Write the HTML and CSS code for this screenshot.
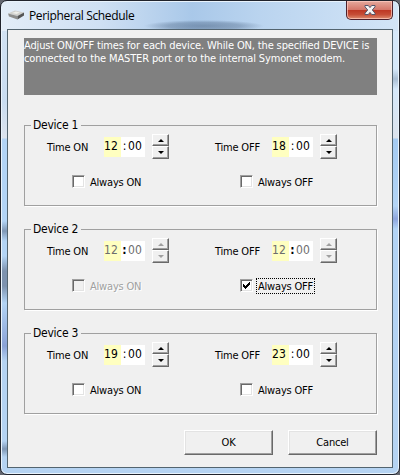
FILE: index.html
```
<!DOCTYPE html>
<html lang="en">
<head>
	<meta charset="utf-8">
	<title>Peripheral Schedule</title>
	<link rel="stylesheet" href="styles.css">
</head>
<body>
	<div class="window">
		<!-- title bar -->
		<div class="titlebar">
			<svg class="app-icon" width="16" height="10" viewBox="0 0 16 10">
				<path d="M0 3.5 7 0.5 16 2.5 9.5 6z" fill="#d0d0cc"/>
				<path d="M0 3.5 9.5 6V9.5L1 6.5z" fill="#8d8d8b"/>
				<path d="M9.5 6 16 2.5V5.5L9.5 9.5z" fill="#555"/>
				<path d="M4 3 8 1.5 12 2.5 8.5 4z" fill="#eeeeea"/>
			</svg>
			<span class="title">Peripheral Schedule</span>
			<button class="close" type="button" aria-label="Close">
				<svg width="12" height="10" viewBox="0 0 12 10">
					<path d="M1 .5H4.3L6 2.6 7.7.5H11V1.8L8.3 5 11 8.2V9.5H7.7L6 7.4 4.3 9.5H1V8.2L3.7 5 1 1.8z" fill="#f4f4f4" stroke="#53566b"/>
				</svg>
			</button>
		</div>

		<div class="client">
			<p class="description">Adjust ON/OFF times for each device. While ON, the specified DEVICE is<br>connected to the MASTER port or to the internal Symonet modem.</p>

			<!-- device groups -->
			<fieldset class="group">
				<legend>Device 1</legend>
				<div class="setting">
					<div class="time-row">
						<span class="label">Time ON</span>
						<div class="time"><span class="hour">12</span><span class="colon">:</span><span class="minute">00</span></div>
						<div class="spin"><button type="button" class="up"></button><button type="button" class="down"></button></div>
					</div>
					<label class="always"><span class="box"></span><span class="text">Always ON</span></label>
				</div>
				<div class="setting">
					<div class="time-row">
						<span class="label">Time OFF</span>
						<div class="time"><span class="hour">18</span><span class="colon">:</span><span class="minute">00</span></div>
						<div class="spin"><button type="button" class="up"></button><button type="button" class="down"></button></div>
					</div>
					<label class="always"><span class="box"></span><span class="text">Always OFF</span></label>
				</div>
			</fieldset>

			<fieldset class="group">
				<legend>Device 2</legend>
				<div class="setting disabled">
					<div class="time-row">
						<span class="label">Time ON</span>
						<div class="time"><span class="hour">12</span><span class="colon">:</span><span class="minute">00</span></div>
						<div class="spin"><button type="button" class="up"></button><button type="button" class="down"></button></div>
					</div>
					<label class="always off"><span class="box"></span><span class="text">Always ON</span></label>
				</div>
				<div class="setting disabled">
					<div class="time-row">
						<span class="label">Time OFF</span>
						<div class="time"><span class="hour">12</span><span class="colon">:</span><span class="minute">00</span></div>
						<div class="spin"><button type="button" class="up"></button><button type="button" class="down"></button></div>
					</div>
					<label class="always focused">
						<span class="box"><svg width="7" height="7" viewBox="0 0 7 7" shape-rendering="crispEdges"><path d="M0 2H1V3H2V4H3V3H4V2H5V1H6V0H7V3H6V4H5V5H4V6H3V7H2V6H1V5H0z" fill="#000"/></svg></span>
						<span class="text">Always OFF</span>
					</label>
				</div>
			</fieldset>

			<fieldset class="group">
				<legend>Device 3</legend>
				<div class="setting">
					<div class="time-row">
						<span class="label">Time ON</span>
						<div class="time"><span class="hour">19</span><span class="colon">:</span><span class="minute">00</span></div>
						<div class="spin"><button type="button" class="up"></button><button type="button" class="down"></button></div>
					</div>
					<label class="always"><span class="box"></span><span class="text">Always ON</span></label>
				</div>
				<div class="setting">
					<div class="time-row">
						<span class="label">Time OFF</span>
						<div class="time"><span class="hour">23</span><span class="colon">:</span><span class="minute">00</span></div>
						<div class="spin"><button type="button" class="up"></button><button type="button" class="down"></button></div>
					</div>
					<label class="always"><span class="box"></span><span class="text">Always OFF</span></label>
				</div>
			</fieldset>

			<div class="buttons">
				<button type="button">OK</button>
				<button type="button">Cancel</button>
			</div>
		</div>
	</div>
</body>
</html>
```
FILE: styles.css
```
* {
	margin: 0;
	padding: 0;
	box-sizing: border-box;
}

body {
	width: 400px;
	height: 475px;
	overflow: hidden;
	background: #63666f;
	font-family: "DejaVu Sans Condensed", "DejaVu Sans", sans-serif;
	font-stretch: condensed;
	font-size: 11px;
	line-height: 13px;
	letter-spacing: -.2px;
	color: #000;
	white-space: nowrap;
}

button {
	font: inherit;
	letter-spacing: inherit;
	color: inherit;
}

.window {
	width: 400px;
	height: 475px;
	padding: 0 6px 6px;
	border: 1px solid #20232c;
	border-radius: 7px;
	box-shadow: inset 0 0 0 1px #e9f3fc;
	background:
		radial-gradient(ellipse 60px 6px at 203px 25px, rgba(67,91,122,.5), rgba(67,91,122,.35) 60%, transparent),
		linear-gradient(to right, #e3edf8, #cfe0f3 25%, #a9c8e9 48%, #bad4ef 65%, #d3e5f7) 0 0 / 100% 30px no-repeat,
		linear-gradient(to bottom, #d5e4f4 0, #c9dcf0 100px, #dce3ed 137px, #b3d4f5 138px, #b3d4f5 220px, #7f97b5 230px, #b3d4f5 240px, #b3d4f5 255px, #7d92ae 270px, #7d92ae 285px, #b3d4f5 302px, #8aa2d6 345px, #b5d3f2 360px, #b5d3f2 440px, #7f97b5 448px, #b5d3f2 456px) 0 0 / 8px 100% no-repeat,
		linear-gradient(to bottom, #d5e8fa 0, #d5e8fa 68px, #a9bed4 78px, #d5e8fa 88px, #dce3ed 137px, #a5cbf2 138px, #b3d4f5 205px, #8ea5dd 218px, #b3d4f5 228px, #b5d3f2);
}

.titlebar {
	display: flex;
	height: 28px;
	padding-left: 1px;
}

.app-icon {
	margin-top: 9px;
}

.title {
	margin: 7px 0 0 5px;
	font-family: "Open Sans", "Noto Sans", sans-serif;
	font-stretch: normal;
	font-size: 12px;
	line-height: 15px;
	letter-spacing: -.35px;
}

.close {
	display: flex;
	align-items: center;
	justify-content: center;
	width: 47px;
	height: 19px;
	margin-left: auto;
	border: 1px solid #4c202b;
	border-top: 0;
	border-radius: 0 0 5px 5px;
	box-shadow: inset 0 0 0 1px rgba(255,205,195,.7);
	background: linear-gradient(#e5a99d, #d5776a 48%, #bd3623 50%, #c64d36 75%, #de8d70);
}

.client {
	height: 439px;
	padding: 8px 15px 0 16px;
	border: 1px solid #53646f;
	background: #f0f0f0;
}

.description {
	height: 57px;
	width: 353px;
	padding-top: 1px;
	background: #808080;
	color: #fff;
	letter-spacing: -.14px;
}

/* etched group box */
.group {
	display: flex;
	width: 353px;
	min-width: 0;
	height: 88px;
	margin-top: 23px;
	padding: 1px 0 0 22px;
	border: 1px solid #a0a0a0;
	box-shadow: 1px 1px #fff;
}

.group + .group {
	margin-top: 16px;
}

.group legend {
	height: 15px;
	margin-left: -16px;
	padding: 0 3px 0 2px;
	font-size: 12px;
	line-height: 15px;
	letter-spacing: -.25px;
	background: #f0f0f0;
}

.setting {
	flex: none;
	width: 168px;
}

.time-row {
	display: flex;
	height: 25px;
}

.label {
	width: 57px;
	padding-top: 7px;
}

.time {
	display: flex;
	width: 41px;
	height: 20px;
	margin-top: 3px;
	background: #fff;
	font-size: 12px;
	line-height: 18px;
	letter-spacing: .1px;
}

.hour {
	width: 17px;
	background: #ffffc0;
}

.colon {
	width: 7px;
	text-align: center;
}

.disabled .colon {
	font-weight: bold;
}

.disabled .hour,
.disabled .minute {
	color: #6d6d6d;
}

.spin {
	display: flex;
	flex-direction: column;
	width: 17px;
	margin-left: 7px;
}

.spin button {
	display: flex;
	align-items: center;
	justify-content: center;
	width: 17px;
	height: 12px;
	border: 1px solid;
	border-color: #fff #696969 #696969 #fff;
	box-shadow: inset -1px -1px #a0a0a0;
	background: #f0f0f0;
}

.spin .down {
	height: 13px;
}

.spin button::before {
	content: "";
	border: 3px solid transparent;
	border-top: 0;
	border-bottom-color: #000;
}

.spin .down::before {
	border-top: 3px solid #000;
	border-bottom: 0;
}

.disabled .up::before {
	border-bottom-color: #a0a0a0;
}

.disabled .down::before {
	border-top-color: #a0a0a0;
}

.always {
	display: flex;
	align-items: flex-start;
	margin: 16px 0 0 25px;
}

.box {
	display: flex;
	align-items: center;
	justify-content: center;
	width: 13px;
	height: 13px;
	border: 1px solid;
	border-color: #a0a0a0 #fff #fff #a0a0a0;
	box-shadow: inset 1px 1px #696969, inset -1px -1px #e3e3e3;
	background: #fff;
}

.always .text {
	padding: 1px 1px 0;
	margin-left: 4px;
}

.off {
	color: #a0a0a0;
	text-shadow: 1px 1px #fff;
}

.off .box {
	background: #f0f0f0;
}

.focused .text {
	outline: 1px dotted #000;
}

.buttons {
	display: flex;
	justify-content: flex-end;
	gap: 15px;
	width: 353px;
	margin-top: 16px;
}

.buttons button {
	width: 89px;
	height: 25px;
	border: 1px solid;
	border-color: #fff #696969 #696969 #fff;
	box-shadow: inset -1px -1px #a0a0a0, inset 1px 1px #e3e3e3;
	background: #f0f0f0;
}
```
